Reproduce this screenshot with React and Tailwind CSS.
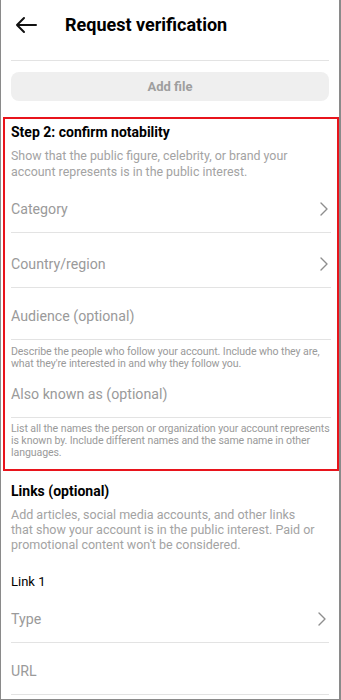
import React from "react";

const Chevron = () => (
  <svg width="10" height="16" viewBox="0 0 10 16" fill="none" className="text-[#8e8e8e]">
    <path d="M2 2l6 6-6 6" stroke="currentColor" strokeWidth="1.4" strokeLinecap="round" strokeLinejoin="round" />
  </svg>
);

const Row = ({ label, chevron, h, pt }) => (
  <div className={`flex justify-between border-b border-[#e3e3e3] ${h} ${pt}`}>
    <span className="text-[14.2px] leading-[18px] text-[#9a9a9a]">{label}</span>
    {chevron && (
      <span className="mr-[2px] mt-[1px]">
        <Chevron />
      </span>
    )}
  </div>
);

const App = () => {
  return (
    <div
      className="w-[341px] h-[700px] overflow-hidden bg-white border-l border-r-2 border-b border-[#8a8a8a]"
      style={{ fontFamily: "Roboto, 'Noto Sans', sans-serif" }}
    >
      {/* Header */}
      <div className="h-[50px] flex items-center">
        <svg width="24" height="18" viewBox="0 0 24 18" fill="none" className="ml-[13px]">
          <path d="M22 9H3M10 2L3 9l7 7" stroke="#111" strokeWidth="2" strokeLinecap="round" strokeLinejoin="round" />
        </svg>
        <h1 className="ml-[27px] text-[18px] font-bold text-black leading-none">Request verification</h1>
      </div>

      <div className="mx-[10px] mt-[10px] border-t border-[#e3e3e3]" />

      <div className="mx-[10px] mt-[11px] h-[29px] rounded-lg bg-[#efefef] flex items-center justify-center">
        <span className="text-[13px] font-bold text-[#9e9e9e]">Add file</span>
      </div>

      {/* Step 2 */}
      <div className="ml-[2px] w-[336px] mt-[16px] border-2 border-[#e8141c] pl-[6px] pr-[6px] pt-[4px] pb-[10px]">
        <h2 className="text-[14px] leading-[18px] font-bold text-black">Step 2: confirm notability</h2>
        <p className="mt-[7px] text-[12.4px] leading-[16px] text-[#a3a3a3]">
          Show that the public figure, celebrity, or brand your
          <br />
          account represents is in the public interest.
        </p>
        <Row label="Category" chevron h="h-[53px]" pt="pt-[20px]" />
        <Row label="Country/region" chevron h="h-[55px]" pt="pt-[22px]" />
        <Row label="Audience (optional)" h="h-[52px]" pt="pt-[19px]" />
        <p className="mt-[6px] text-[10.6px] leading-[12px] tracking-[-0.1px] text-[#9a9a9a]">
          Describe the people who follow your account. Include who they are, what they're interested in and why they follow you.
        </p>
        <Row label="Also known as (optional)" h="h-[48px]" pt="pt-[15px]" />
        <p className="mt-[5px] text-[10.6px] leading-[12px] tracking-[-0.1px] text-[#9a9a9a]">
          List all the names the person or organization your account represents is known by. Include different names and the same name in other languages.
        </p>
      </div>

      {/* Links */}
      <div className="px-[10px]">
        <h2 className="mt-[11px] text-[14px] leading-[18px] font-bold text-black">Links (optional)</h2>
        <p className="mt-[7px] text-[12.5px] leading-[15px] text-[#a3a3a3]">
          Add articles, social media accounts, and other links
          <br />
          that show your account is in the public interest. Paid or
          <br />
          promotional content won't be considered.
        </p>
        <div className="mt-[21px] text-[13px] leading-[18px] text-black">Link 1</div>
        <Row label="Type" chevron h="h-[52px]" pt="pt-[19px]" />
        <Row label="URL" h="h-[52px]" pt="pt-[19px]" />
      </div>
    </div>
  );
};

export default App;
